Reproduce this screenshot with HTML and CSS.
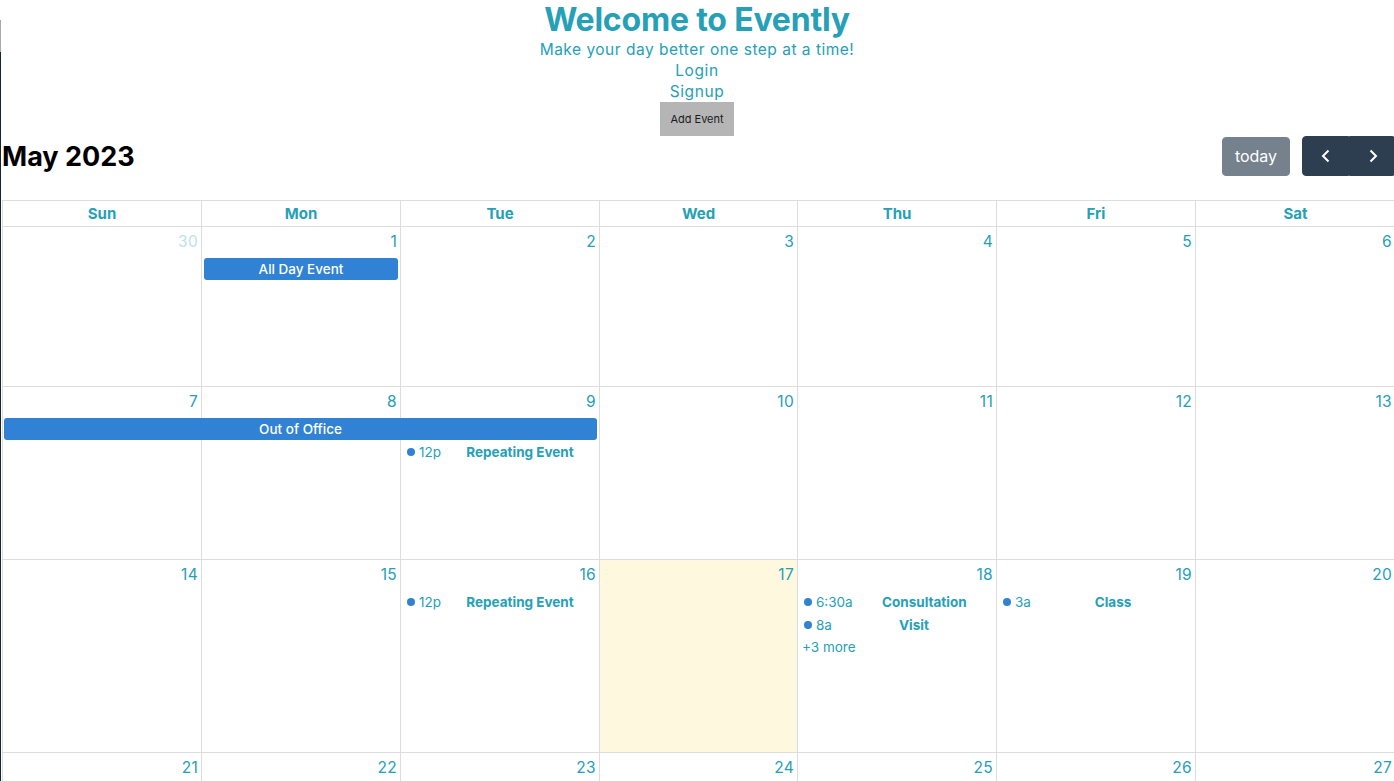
FILE: index.html
```html
<!DOCTYPE html>
<html lang="en">
<head>
<meta charset="utf-8">
<title>Evently</title>
<link rel="stylesheet" href="styles.css">
</head>
<body>
<div class="page">
  <header class="hero">
    <h1 class="hero-title">Welcome to Evently</h1>
    <p class="hero-sub">Make your day better one step at a time!</p>
    <a class="hero-link" href="#">Login</a>
    <a class="hero-link" href="#">Signup</a>
    <button class="add-btn">Add Event</button>
  </header>

  <section class="cal">
    <div class="toolbar">
      <h2 class="cal-title">May 2023</h2>
      <div class="toolbar-right">
        <button class="btn btn-today">today</button>
        <div class="btn-group">
          <button class="btn btn-nav" aria-label="prev">
            <svg width="16" height="16" viewBox="0 0 16 16"><path d="M10.5 2.5 5 8l5.5 5.5" fill="none" stroke="#fff" stroke-width="2"/></svg>
          </button>
          <button class="btn btn-nav" aria-label="next">
            <svg width="16" height="16" viewBox="0 0 16 16"><path d="M5.5 2.5 11 8l-5.5 5.5" fill="none" stroke="#fff" stroke-width="2"/></svg>
          </button>
        </div>
      </div>
    </div>

    <div class="grid">
      <div class="dow">
        <div class="dow-cell">Sun</div>
        <div class="dow-cell">Mon</div>
        <div class="dow-cell">Tue</div>
        <div class="dow-cell">Wed</div>
        <div class="dow-cell">Thu</div>
        <div class="dow-cell">Fri</div>
        <div class="dow-cell">Sat</div>
      </div>

      <div class="week week-1">
        <div class="day c1 other"><span class="num">30</span></div>
        <div class="day c2"><span class="num">1</span></div>
        <div class="day c3"><span class="num">2</span></div>
        <div class="day c4"><span class="num">3</span></div>
        <div class="day c5"><span class="num">4</span></div>
        <div class="day c6"><span class="num">5</span></div>
        <div class="day c7"><span class="num">6</span></div>
        <div class="bar s1 c2">All Day Event</div>
      </div>

      <div class="week week-2">
        <div class="day c1"><span class="num">7</span></div>
        <div class="day c2"><span class="num">8</span></div>
        <div class="day c3"><span class="num">9</span></div>
        <div class="day c4"><span class="num">10</span></div>
        <div class="day c5"><span class="num">11</span></div>
        <div class="day c6"><span class="num">12</span></div>
        <div class="day c7"><span class="num">13</span></div>
        <div class="bar s1 span-1-3">Out of Office</div>
        <div class="dot-ev s2 c3"><i class="dot"></i><span class="time">12p</span><span class="ev-title">Repeating Event</span></div>
      </div>

      <div class="week week-3">
        <div class="day c1"><span class="num">14</span></div>
        <div class="day c2"><span class="num">15</span></div>
        <div class="day c3"><span class="num">16</span></div>
        <div class="day c4 today"><span class="num">17</span></div>
        <div class="day c5"><span class="num">18</span></div>
        <div class="day c6"><span class="num">19</span></div>
        <div class="day c7"><span class="num">20</span></div>
        <div class="dot-ev s1 c3"><i class="dot"></i><span class="time">12p</span><span class="ev-title">Repeating Event</span></div>
        <div class="dot-ev s1 c5"><i class="dot"></i><span class="time">6:30a</span><span class="ev-title">Consultation</span></div>
        <div class="dot-ev s2 c5"><i class="dot"></i><span class="time">8a</span><span class="ev-title">Visit</span></div>
        <a class="more s3 c5" href="#">+3 more</a>
        <div class="dot-ev s1 c6"><i class="dot"></i><span class="time">3a</span><span class="ev-title">Class</span></div>
      </div>

      <div class="week week-4">
        <div class="day c1"><span class="num">21</span></div>
        <div class="day c2"><span class="num">22</span></div>
        <div class="day c3"><span class="num">23</span></div>
        <div class="day c4"><span class="num">24</span></div>
        <div class="day c5"><span class="num">25</span></div>
        <div class="day c6"><span class="num">26</span></div>
        <div class="day c7"><span class="num">27</span></div>
      </div>
    </div>
  </section>
</div>
</body>
</html>
```
FILE: styles.css
```css
html, body {
  margin: 0;
  padding: 0;
  overflow: hidden;
}
body {
  font-family: Inter, "Liberation Sans", sans-serif;
  color: #000;
  background:
    linear-gradient(#a9a9a9, #a9a9a9) 0 20px / 1px 32px no-repeat,
    linear-gradient(#1b2330, #1b2330) 0 52px / 1px 100% no-repeat,
    #fff;
}
.page {
  width: 1396px;
}

/* hero */
.hero {
  display: flex;
  flex-direction: column;
  align-items: center;
  width: 1394px;
  color: #25a0b7;
}
.hero-title {
  margin: 0;
  font-size: 32px;
  line-height: 39px;
  font-weight: 700;
  letter-spacing: -0.2px;
}
.hero-sub {
  margin: 0;
  font-size: 15.5px;
  line-height: 21px;
  letter-spacing: 0.5px;
}
.hero-link {
  color: #25a0b7;
  text-decoration: none;
  font-size: 15.5px;
  line-height: 21px;
  letter-spacing: 0.6px;
}
.add-btn {
  width: 74px;
  height: 34px;
  border: 0;
  padding: 0;
  background: #b5b5b5;
  color: #1c1c1c;
  font-family: inherit;
  font-size: 11px;
}

/* toolbar */
.cal {
  padding-left: 2px;
}
.toolbar {
  display: flex;
  align-items: center;
  justify-content: space-between;
  height: 40px;
  margin-bottom: 24px;
}
.cal-title {
  margin: 0;
  font-size: 27px;
  font-weight: 700;
}
.toolbar-right {
  display: flex;
  align-items: center;
  gap: 12px;
}
.btn {
  height: 40px;
  border: 1px solid #2c3e50;
  background: #2c3e50;
  color: #fff;
  font-family: inherit;
  font-size: 16px;
  border-radius: 4px;
  padding: 0 10px;
}
.btn-today {
  opacity: 0.65;
  height: 39px;
  width: 68px;
}
.btn-group {
  display: flex;
}
.btn-nav {
  width: 47px;
  display: flex;
  align-items: center;
  justify-content: center;
}
.btn-nav:first-child {
  border-radius: 4px 0 0 4px;
}
.btn-nav:last-child {
  border-radius: 0 4px 4px 0;
}

/* grid */
.grid {
  --cols: 199px 199px 199px 198px 199px 199px 200px;
  width: 1393px;
}
.dow {
  display: grid;
  grid-template-columns: var(--cols);
}
.dow-cell {
  border-left: 1px solid #ddd;
  border-top: 1px solid #ddd;
  height: 25px;
  line-height: 25px;
  text-align: center;
  font-weight: 700;
  font-size: 15px;
  color: #25a0b7;
}
.week {
  display: grid;
  grid-template-columns: var(--cols);
  grid-template-rows: 31px 23px 23px 23px 1fr;
}
.week-1 { height: 160px; }
.week-2 { height: 173px; }
.week-3 { height: 193px; }
.week-4 { height: 100px; }

.day {
  grid-row: 1 / -1;
  border-left: 1px solid #ddd;
  border-top: 1px solid #ddd;
  display: flex;
  justify-content: flex-end;
  align-items: flex-start;
}
.day.today {
  background: #fef8df;
}
.num {
  padding: 5px 3px 0 4px;
  font-size: 15.5px;
  line-height: 20px;
  color: #25a0b7;
  letter-spacing: 0.3px;
}
.other .num {
  opacity: 0.3;
}

.c1 { grid-column: 1; }
.c2 { grid-column: 2; }
.c3 { grid-column: 3; }
.c4 { grid-column: 4; }
.c5 { grid-column: 5; }
.c6 { grid-column: 6; }
.c7 { grid-column: 7; }
.span-1-3 { grid-column: 1 / 4; }
.s1 { grid-row: 2; }
.s2 { grid-row: 3; }
.s3 { grid-row: 4; }

.bar {
  margin: 1px 2px 0 3px;
  height: 22px;
  background: #3182d4;
  border-radius: 3px;
  color: #fff;
  font-size: 13.5px;
  font-weight: 500;
  line-height: 22px;
  text-align: center;
  z-index: 1;
}
.span-1-3.bar {
  margin-left: 2px;
}
.dot-ev {
  display: flex;
  align-items: center;
  margin: 0 3px 0 3px;
  padding-left: 4px;
  font-size: 13.5px;
  color: #25a0b7;
  z-index: 1;
  white-space: nowrap;
}
.dot {
  width: 8px;
  height: 8px;
  border-radius: 50%;
  background: #3182d4;
  margin-right: 4px;
}
.time {
  margin-right: 3px;
}
.ev-title {
  flex: 1;
  text-align: center;
  font-weight: 700;
}
.more {
  margin-left: 5px;
  font-size: 13.5px;
  line-height: 23px;
  color: #25a0b7;
  text-decoration: none;
  z-index: 1;
}
```
